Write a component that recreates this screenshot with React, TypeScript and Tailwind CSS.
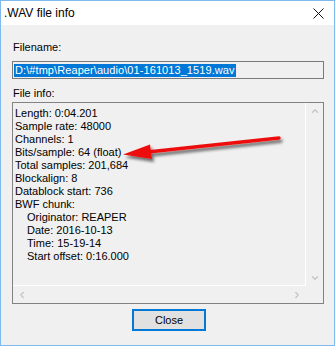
import { ChevronUp, ChevronDown, ChevronLeft, ChevronRight } from "lucide-react";

const lines: { text: string; indent?: boolean }[] = [
  { text: "Length: 0:04.201" },
  { text: "Sample rate: 48000" },
  { text: "Channels: 1" },
  { text: "Bits/sample: 64 (float)" },
  { text: "Total samples: 201,684" },
  { text: "Blockalign: 8" },
  { text: "Datablock start: 736" },
  { text: "BWF chunk:" },
  { text: "Originator: REAPER", indent: true },
  { text: "Date: 2016-10-13", indent: true },
  { text: "Time: 15-19-14", indent: true },
  { text: "Start offset: 0:16.000", indent: true },
];

// red annotation arrow drawn over the dialog
function Arrow() {
  return (
    <svg className="absolute left-0 top-0 pointer-events-none" width="335" height="346">
      <defs>
        <filter id="sh" x="-20%" y="-50%" width="140%" height="200%">
          <feDropShadow dx="2" dy="3" stdDeviation="1.6" floodColor="#000" floodOpacity="0.55" />
        </filter>
      </defs>
      <g filter="url(#sh)">
        <line x1="278" y1="137" x2="142" y2="151.5" stroke="#ee1111" strokeWidth="3.5" strokeLinecap="round" />
        <polygon points="122,153.5 149,143.5 151,158" fill="#ee1111" />
      </g>
    </svg>
  );
}

export default function App() {
  return (
    <div
      className="relative w-[335px] h-[346px] border border-[#7fb9ee] bg-[#f0f0f0] flex flex-col text-[11px] text-black"
      style={{ fontFamily: '"Liberation Sans", Arial, sans-serif' }}
    >
      <div className="h-[24px] shrink-0 bg-white flex items-center justify-between pl-[3px] pr-[10px]">
        <span className="text-[12px] leading-none">.WAV file info</span>
        <svg width="11" height="11" viewBox="0 0 11 11">
          <path d="M0.5 0.5 L10.5 10.5 M10.5 0.5 L0.5 10.5" stroke="#111" strokeWidth="1" />
        </svg>
      </div>

      <div className="flex flex-col pl-[11px] pr-[10px]">
        <div className="mt-[16px] pl-[1px] leading-[13px]">Filename:</div>
        <div className="mt-[7px] h-[18px] border border-[#7a7a7a] bg-[#f0f0f0] flex items-center pl-[1px]">
          <span className="bg-[#0078d7] text-white leading-[13px] px-[1px] tracking-[0.08px]">
            D:\#tmp\Reaper\audio\01-161013_1519.wav
          </span>
        </div>
        <div className="mt-[8px] pl-[1px] leading-[13px]">File info:</div>
        <div className="mt-[2px] h-[202px] border border-[#828282] grid grid-cols-[1fr_17px] grid-rows-[1fr_17px]">
          <div className="border-r border-b border-white pl-[2px] pt-[4px] leading-[13px]">
            {lines.map((l) => (
              <div key={l.text} className={l.indent ? "pl-[12px]" : ""}>
                {l.text}
              </div>
            ))}
          </div>
          <div className="flex flex-col items-center justify-between py-[3px] text-[#c4c4c4]">
            <ChevronUp size={10} strokeWidth={3} />
            <ChevronDown size={10} strokeWidth={3} />
          </div>
          <div className="flex items-center justify-between px-[4px] text-[#c4c4c4]">
            <ChevronLeft size={10} strokeWidth={3} />
            <ChevronRight size={10} strokeWidth={3} />
          </div>
          <div />
        </div>
        <div className="mt-[5px] flex justify-center pl-[2px]">
          <button className="w-[74px] h-[22px] border-2 border-[#0078d7] bg-[#e1e1e1] leading-none">
            Close
          </button>
        </div>
      </div>
      <Arrow />
    </div>
  );
}
